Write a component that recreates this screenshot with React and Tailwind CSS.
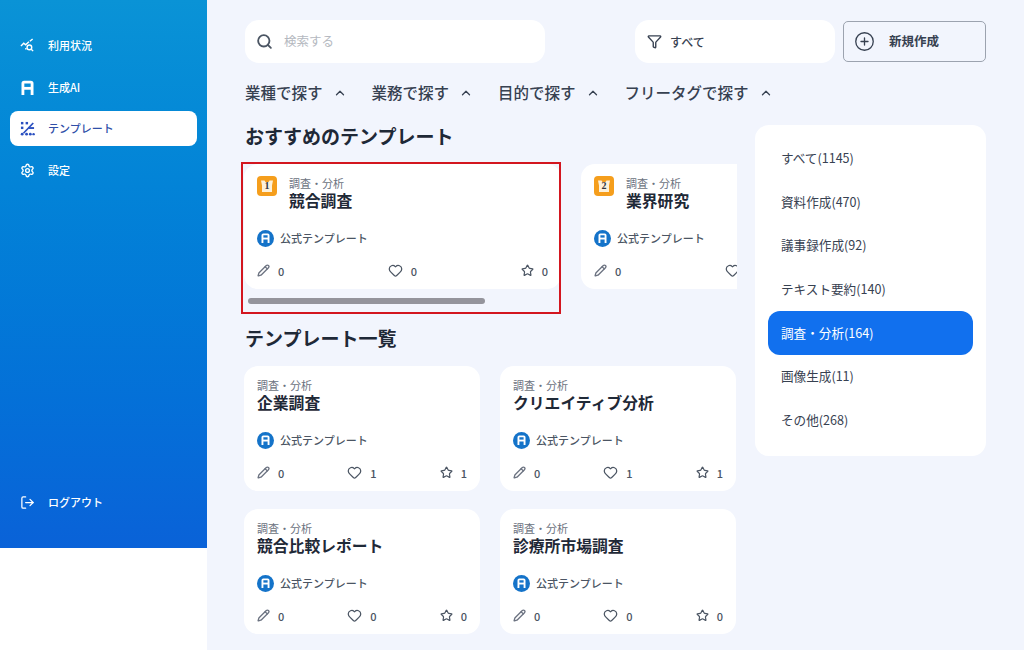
import { Search, Filter, CirclePlus, ChevronUp, Pencil, Heart, Star, Settings, LogOut } from 'lucide-react';

const font = { fontFamily: '"Noto Sans CJK JP", "Noto Sans", sans-serif' };

function LogoMark({ className }) {
  return (
    <svg viewBox="0 0 16 18" className={className} fill="none" stroke="currentColor" strokeWidth="3.4">
      <path d="M2.500 18V4a1.500 1.500 0 0 1 1.500-1.500h8a1.500 1.500 0 0 1 1.500 1.500V18" />
      <path d="M3 10h10" />
    </svg>
  );
}

function UsageIcon({ className }) {
  return (
    <svg viewBox="0 0 16 16" className={className} fill="none" stroke="currentColor" strokeWidth="1.5">
      <path d="M1 8.500l3-3 2 1.800L9.500 4" />
      <path d="M10.500 3.500L13.500 1" />
      <circle cx="10" cy="10" r="2.500" />
      <path d="M12 12l2 2" />
      <path d="M5.500 11.500H7" />
    </svg>
  );
}

function TemplateIcon({ className }) {
  return (
    <svg viewBox="0 0 16 16" className={className} fill="currentColor">
      <rect x="1" y="1" width="2.600" height="2.600" />
      <rect x="1" y="6" width="2.600" height="2.600" />
      <rect x="6" y="1" width="2.600" height="2.600" />
      <path d="M3 12.500L13.500 1.500l1.300 1.200L4.300 13.700z" />
      <rect x="9" y="6.500" width="6" height="2" />
      <circle cx="2.300" cy="14" r="1.500" />
      <circle cx="7" cy="14" r="1.500" />
      <circle cx="11" cy="14" r="1.500" />
      <circle cx="14.500" cy="14" r="1.300" />
    </svg>
  );
}

function RankBadge({ n }) {
  return (
    <div className="w-[20px] h-[20px] rounded-[4px] bg-[#f59e1c] flex items-center justify-center shrink-0 relative">
      <svg viewBox="0 0 16 16" className="w-[16px] h-[16px] absolute left-[2px] top-[2px]" fill="#fdf1da">
        <path d="M2 2.500h3.500l1 1.500h3l1-1.500H14l-1 5v6.500H3V7.500z" />
      </svg>
      <span className="relative text-[10px] font-bold text-[#2f3640] leading-none" style={{ fontFamily: '"Liberation Serif", serif' }}>{n}</span>
    </div>
  );
}

function NavItem({ icon, label, active }) {
  return (
    <div className={`h-[35px] mx-[10px] rounded-[8px] flex items-center pl-[10px] gap-[13px] text-[11px] font-medium ${active ? 'bg-white text-[#2f4fa8]' : 'text-white'}`}>
      {icon}
      <span>{label}</span>
    </div>
  );
}

function Card({ title, like, star, rank, width = 'w-[236px]' }) {
  return (
    <div className={`${width} rounded-[14px] shrink-0 h-[125px] bg-white pt-[12px] px-[13px] flex flex-col`}>
      <div className="flex gap-[12px]">
        {rank && <RankBadge n={rank} />}
        <div className="flex flex-col">
          <span className="text-[11px] leading-[14px] text-[#6b7280]">調査・分析</span>
          <span className="text-[15.800px] leading-[22px] font-bold text-[#1f2937]">{title}</span>
        </div>
      </div>
      <div className="flex items-center gap-[6px] mt-[17.500px]">
        <span className="w-[17px] h-[17px] rounded-full bg-[#1473c9] flex items-center justify-center text-white">
          <LogoMark className="w-[9px] h-[10px]" />
        </span>
        <span className="text-[11px] font-medium text-[#4b5563]">公式テンプレート</span>
      </div>
      <div className="flex items-center justify-between mt-[16px] text-[11px] font-medium text-[#4b5563]">
        <span className="flex items-center gap-[8px]"><Pencil size={13} className="text-[#6b7280]" strokeWidth={2.4} />0</span>
        <span className="flex items-center gap-[8px]"><Heart size={15} />{like}</span>
        <span className="flex items-center gap-[8px]"><Star size={13} strokeWidth={2.2} />{star}</span>
      </div>
    </div>
  );
}

const categories = [
  ['すべて(1145)'],
  ['資料作成(470)'],
  ['議事録作成(92)'],
  ['テキスト要約(140)'],
  ['調査・分析(164)', true],
  ['画像生成(11)'],
  ['その他(268)'],
];

const tags = ['業種で探す', '業務で探す', '目的で探す', 'フリータグで探す'];

export default function App() {
  return (
    <div style={font} className="w-[1024px] h-[650px] overflow-hidden flex bg-[#f2f5fd]">
      {/* サイドバー */}
      <div className="w-[207px] h-full bg-white shrink-0">
        <div className="h-[548px] bg-gradient-to-b from-[#0a93d6] to-[#0a62d8] pt-[28px] flex flex-col gap-[6.500px]">
          <NavItem label="利用状況" icon={<UsageIcon className="w-[15px] h-[15px]" />} />
          <NavItem label="生成AI" icon={<LogoMark className="w-[15px] h-[15px]" />} />
          <NavItem active label="テンプレート" icon={<TemplateIcon className="w-[15px] h-[15px] text-[#2a4fc0]" />} />
          <NavItem label="設定" icon={<Settings size={15} strokeWidth={2.2} />} />
          <div className="mt-auto mb-[28px]">
            <NavItem label="ログアウト" icon={<LogOut size={15} />} />
          </div>
        </div>
      </div>

      {/* メイン */}
      <div className="flex-1 pl-[38px] pr-[38px] pt-[20px]">
        <div className="flex items-center h-[43px]">
          <div className="w-[300px] h-[43px] bg-white rounded-[14px] flex items-center pl-[11px] gap-[11px] text-[#4b5563] shrink-0">
            <Search size={17} strokeWidth={2.6} />
            <span className="text-[12.500px] text-[#b4b8c0]">検索する</span>
          </div>
          <div className="ml-[90px] w-[200px] h-[43px] bg-white rounded-[14px] flex items-center pl-[12px] gap-[8px] shrink-0 text-[#374151]">
            <Filter size={15} strokeWidth={2.2} />
            <span className="text-[12px] font-medium">すべて</span>
          </div>
          <div className="ml-[8px] w-[143px] h-[41px] bg-[#f2f5fd] border border-[#9ca3af] rounded-[5px] flex items-center pl-[10px] gap-[14px] text-[#374151] shrink-0">
            <CirclePlus size={21} strokeWidth={1.5} />
            <span className="text-[12.500px] font-bold">新規作成</span>
          </div>
        </div>

        <div className="flex items-center gap-[25px] mt-[18px] h-[24px]">
          {tags.map((t) => (
            <div key={t} className="flex items-center gap-[10px] text-[15.500px] font-medium text-[#374151]">
              <span>{t}</span>
              <ChevronUp size={14} strokeWidth={2.2} />
            </div>
          ))}
        </div>

        <div className="flex gap-[18px] mt-[11px]">
          <div className="w-[492px] shrink-0">
            <h2 className="text-[19px] leading-[26px] font-bold text-[#1f2937] mt-[7px]">おすすめのテンプレート</h2>

            <div className="mt-[13px] -ml-[4px] w-[496px] overflow-hidden relative h-[154px]">
              <div className="flex gap-[20px] pl-[3px] pt-[2px]">
                <Card title="競合調査" like={0} star={0} rank="1" width="w-[317px]" />
                <Card title="業界研究" like={0} star={0} rank="2" width="w-[317px]" />
              </div>
              {/* 赤枠 */}
              <div className="absolute left-0 top-0 w-[320px] h-[152px] border-2 border-[#d3161f]" />
              <div className="absolute left-[7px] top-[136px] w-[237px] h-[6px] rounded-full bg-[#94949c]" />
            </div>

            <h2 className="text-[19px] leading-[26px] font-bold text-[#1f2937] mt-[9px]">テンプレート一覧</h2>
            <div className="grid grid-cols-[236px_236px] gap-x-[20px] gap-y-[18px] mt-[15px] -ml-[1px]">
              <Card title="企業調査" like={1} star={1} />
              <Card title="クリエイティブ分析" like={1} star={1} />
              <Card title="競合比較レポート" like={0} star={0} />
              <Card title="診療所市場調査" like={0} star={0} />
            </div>
          </div>

          {/* カテゴリ */}
          <div className="w-[231px] h-[331px] bg-white rounded-[14px] mt-[9px] px-[13px] pt-[11.500px] shrink-0 flex flex-col">
            {categories.map(([label, active]) => (
              <div key={label} className={`h-[43.700px] shrink-0 rounded-[12px] flex items-center pl-[13px] text-[12.600px] ${active ? 'bg-[#1170ee] text-white' : 'text-[#374151]'}`}>
                {label}
              </div>
            ))}
          </div>
        </div>
      </div>
    </div>
  );
}
